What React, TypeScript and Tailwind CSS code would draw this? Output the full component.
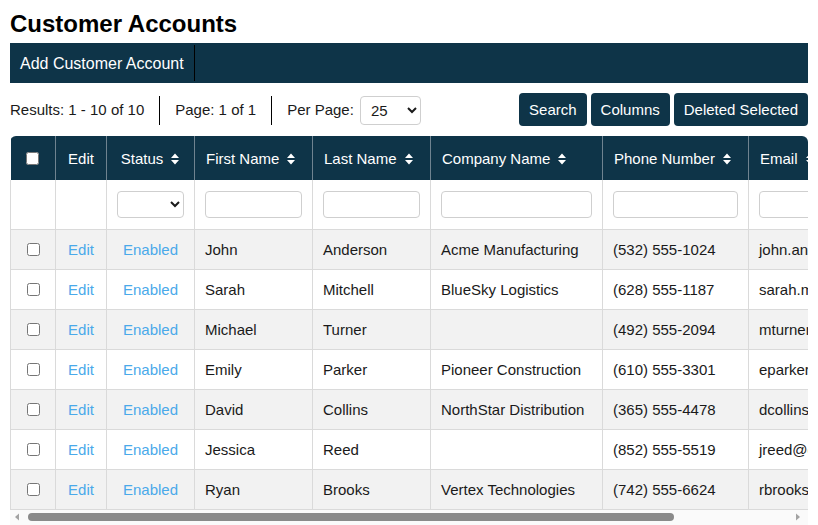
import React from "react";

const rows = [
  { first: "John", last: "Anderson", company: "Acme Manufacturing", phone: "(532) 555-1024", email: "john.anderson@example.com" },
  { first: "Sarah", last: "Mitchell", company: "BlueSky Logistics", phone: "(628) 555-1187", email: "sarah.mitchell@example.com" },
  { first: "Michael", last: "Turner", company: "", phone: "(492) 555-2094", email: "mturner@example.com" },
  { first: "Emily", last: "Parker", company: "Pioneer Construction", phone: "(610) 555-3301", email: "eparker@example.com" },
  { first: "David", last: "Collins", company: "NorthStar Distribution", phone: "(365) 555-4478", email: "dcollins@example.com" },
  { first: "Jessica", last: "Reed", company: "", phone: "(852) 555-5519", email: "jreed@example.com" },
  { first: "Ryan", last: "Brooks", company: "Vertex Technologies", phone: "(742) 555-6624", email: "rbrooks@example.com" },
];

const SortIcon = () => (
  <svg width="10" height="14" viewBox="0 0 10 14" className="inline-block ml-[7px] -mt-[2px] align-middle">
    <path d="M1 6 L5 1.5 L9 6 Z M1 8 L9 8 L5 12.5 Z" fill="white" />
  </svg>
);

const Th = ({ children, sort = false, center = false }) => (
  <th
    className={`h-[44px] border-x border-[#6f8390] px-[11px] pt-[2px] font-normal text-white whitespace-nowrap ${
      center ? "text-center" : "text-left"
    }`}
  >
    {children}
    {sort && <SortIcon />}
  </th>
);

const FilterInput = () => (
  <input type="text" className="w-full h-[27px] bg-white border border-[#cfcfcf] rounded-[4px]" />
);

export default function App() {
  return (
    <div className="px-[10px] pt-[10px] font-['Liberation_Sans',Arial,sans-serif] text-[15px] text-[#1a1a1a] bg-white">
      <h1 className="text-[24px] font-bold leading-[28px] text-black mb-[5px]">Customer Accounts</h1>

      <div className="h-[40px] bg-[#0e3448] flex">
        <button className="px-[10px] pt-[1px] text-white text-[16px] border-r border-black my-[2px]">
          Add Customer Account
        </button>
      </div>

      <div className="flex items-center justify-between mt-[10px] h-[33px]">
        <div className="flex items-center pt-[1px]">
          <span>Results: 1 - 10 of 10</span>
          <span className="mx-[15px] w-px h-[29px] bg-black" />
          <span>Page: 1 of 1</span>
          <span className="mx-[15px] w-px h-[29px] bg-black" />
          <span>Per Page:</span>
          <select className="ml-[6px] w-[61px] h-[29px] pl-[6px] bg-white border border-[#cfcfcf] rounded-[4px]">
            <option>25</option>
          </select>
        </div>
        <div className="flex gap-[4px]">
          <button className="h-[33px] px-[10px] pt-[1px] rounded-[4px] bg-[#0e3448] text-white">Search</button>
          <button className="h-[33px] px-[10px] pt-[1px] rounded-[4px] bg-[#0e3448] text-white">Columns</button>
          <button className="h-[33px] px-[10px] pt-[1px] rounded-[4px] bg-[#0e3448] text-white">Deleted Selected</button>
        </div>
      </div>

      <div className="mt-[10px] rounded-t-[6px] overflow-hidden">
        <table className="table-fixed border-collapse w-[960px]">
          <colgroup>
            <col className="w-[45px]" />
            <col className="w-[51px]" />
            <col className="w-[88px]" />
            <col className="w-[118px]" />
            <col className="w-[118px]" />
            <col className="w-[172px]" />
            <col className="w-[146px]" />
            <col className="w-[222px]" />
          </colgroup>
          <thead className="bg-[#0e3448]">
            <tr>
              <th className="h-[44px] border-r border-[#6f8390] text-center">
                <input type="checkbox" className="align-middle" />
              </th>
              <Th center>Edit</Th>
              <Th center sort>Status</Th>
              <Th sort>First Name</Th>
              <Th sort>Last Name</Th>
              <Th sort>Company Name</Th>
              <Th sort>Phone Number</Th>
              <Th sort>Email</Th>
            </tr>
          </thead>
          <tbody>
            <tr className="bg-white">
              <td className="h-[49px] border border-[#dadada] border-t-0" />
              <td className="border border-[#dadada] border-t-0" />
              <td className="border border-[#dadada] border-t-0 px-[10px]">
                <select className="w-full h-[27px] bg-white border border-[#cfcfcf] rounded-[4px]">
                  <option></option>
                </select>
              </td>
              <td className="border border-[#dadada] border-t-0 px-[10px]"><FilterInput /></td>
              <td className="border border-[#dadada] border-t-0 px-[10px]"><FilterInput /></td>
              <td className="border border-[#dadada] border-t-0 px-[10px]"><FilterInput /></td>
              <td className="border border-[#dadada] border-t-0 px-[10px]"><FilterInput /></td>
              <td className="border border-[#dadada] border-t-0 px-[10px]"><FilterInput /></td>
            </tr>
            {rows.map((r, i) => (
              <tr key={r.first} className={i % 2 === 0 ? "bg-[#f2f2f2]" : "bg-white"}>
                <td className="h-[40px] border border-[#dadada] text-center">
                  <input type="checkbox" className="align-middle" />
                </td>
                <td className="border border-[#dadada] pt-[2px] text-center text-[#4aa9ea]">Edit</td>
                <td className="border border-[#dadada] pt-[2px] text-center text-[#4aa9ea]">Enabled</td>
                <td className="border border-[#dadada] pt-[2px] px-[10px] whitespace-nowrap">{r.first}</td>
                <td className="border border-[#dadada] pt-[2px] px-[10px] whitespace-nowrap">{r.last}</td>
                <td className="border border-[#dadada] pt-[2px] px-[10px] whitespace-nowrap">{r.company}</td>
                <td className="border border-[#dadada] pt-[2px] px-[10px] whitespace-nowrap">{r.phone}</td>
                <td className="border border-[#dadada] pt-[2px] px-[10px] whitespace-nowrap">{r.email}</td>
              </tr>
            ))}
          </tbody>
        </table>
      </div>

      <div className="h-[15px] flex items-center bg-[#fafafa]">
        <svg width="14" height="14" viewBox="0 0 14 14" className="ml-[1px]">
          <path d="M4 7 L8 3.5 L8 10.5 Z" fill="#a3a3a3" />
        </svg>
        <div className="ml-[3px] h-[8px] w-[646px] rounded-full bg-[#8a8a8a]" />
        <div className="flex-1" />
        <svg width="14" height="14" viewBox="0 0 14 14" className="mr-[4px]">
          <path d="M10 7 L6 3.5 L6 10.5 Z" fill="#a3a3a3" />
        </svg>
      </div>
    </div>
  );
}
